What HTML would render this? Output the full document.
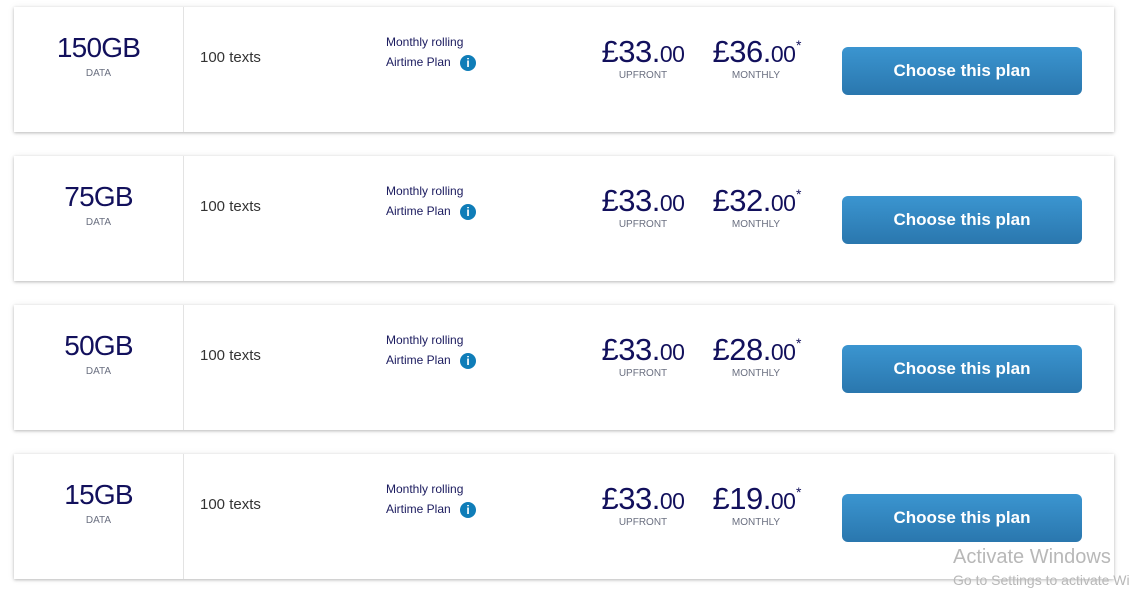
<!DOCTYPE html>
<html><head><style>
body{margin:0;width:1130px;height:593px;background:#fff;font-family:"Liberation Sans",sans-serif;position:relative;overflow:hidden}
.card{position:absolute;left:14px;width:1100px;height:125px;background:#fff;box-shadow:0 1px 3px rgba(0,0,0,.25),0 0 8px rgba(0,0,0,.06)}
.div{position:absolute;left:169px;top:0;width:1px;height:125px;background:#e3e3e3}
.gb{position:absolute;left:0;width:169px;top:25px;text-align:center;font-size:28px;color:#12105c;letter-spacing:-.8px}
.data{position:absolute;left:0;width:169px;top:61px;text-align:center;font-size:10px;color:#6a6f80}
.tx{position:absolute;left:186px;top:42px;font-size:15px;color:#333}
.m{position:absolute;left:372px;font-size:12px;color:#1a1a5e}
.i{position:absolute;left:446px;top:48px;width:16px;height:16px;border-radius:50%;background:#0f7db8;color:#fff;font-size:12px;font-weight:bold;text-align:center;line-height:16px}
.p{position:absolute;top:27px;font-size:31px;color:#12105c;width:100px;text-align:center;letter-spacing:-.5px}
.p small{font-size:23px}
.l{position:absolute;top:63px;font-size:10px;color:#6a6f80;width:100px;text-align:center}
.ast{position:absolute;left:782px;top:30px;font-size:14px;color:#12105c}
.btn{position:absolute;left:828px;top:40px;width:240px;height:48px;border-radius:6px;background:linear-gradient(#3b95d0,#2a77ae);color:#fff;font-weight:bold;font-size:17px;text-align:center;line-height:48px}
.w1{position:absolute;left:953px;top:546px;font-size:20px;color:#b8b8b8}
.w2{position:absolute;left:953px;top:572px;font-size:14px;color:#b8b8b8;white-space:nowrap}
</style></head><body>
<div class="card" style="top:7px"><div class="div"></div><div class="gb">150GB</div><div class="data">DATA</div><div class="tx">100 texts</div><div class="m" style="top:28px">Monthly rolling</div><div class="m" style="top:48px">Airtime Plan</div><div class="i">i</div><div class="p" style="left:579px">£33.<small>00</small></div><div class="l" style="left:579px">UPFRONT</div><div class="p" style="left:690px">£36.<small>00</small></div><div class="l" style="left:692px">MONTHLY</div><div class="ast">*</div><div class="btn">Choose this plan</div></div>
<div class="card" style="top:156px"><div class="div"></div><div class="gb">75GB</div><div class="data">DATA</div><div class="tx">100 texts</div><div class="m" style="top:28px">Monthly rolling</div><div class="m" style="top:48px">Airtime Plan</div><div class="i">i</div><div class="p" style="left:579px">£33.<small>00</small></div><div class="l" style="left:579px">UPFRONT</div><div class="p" style="left:690px">£32.<small>00</small></div><div class="l" style="left:692px">MONTHLY</div><div class="ast">*</div><div class="btn">Choose this plan</div></div>
<div class="card" style="top:305px"><div class="div"></div><div class="gb">50GB</div><div class="data">DATA</div><div class="tx">100 texts</div><div class="m" style="top:28px">Monthly rolling</div><div class="m" style="top:48px">Airtime Plan</div><div class="i">i</div><div class="p" style="left:579px">£33.<small>00</small></div><div class="l" style="left:579px">UPFRONT</div><div class="p" style="left:690px">£28.<small>00</small></div><div class="l" style="left:692px">MONTHLY</div><div class="ast">*</div><div class="btn">Choose this plan</div></div>
<div class="card" style="top:454px"><div class="div"></div><div class="gb">15GB</div><div class="data">DATA</div><div class="tx">100 texts</div><div class="m" style="top:28px">Monthly rolling</div><div class="m" style="top:48px">Airtime Plan</div><div class="i">i</div><div class="p" style="left:579px">£33.<small>00</small></div><div class="l" style="left:579px">UPFRONT</div><div class="p" style="left:690px">£19.<small>00</small></div><div class="l" style="left:692px">MONTHLY</div><div class="ast">*</div><div class="btn">Choose this plan</div></div>
<div class="w1">Activate Windows</div><div class="w2">Go to Settings to activate Windows.</div>
</body></html>
